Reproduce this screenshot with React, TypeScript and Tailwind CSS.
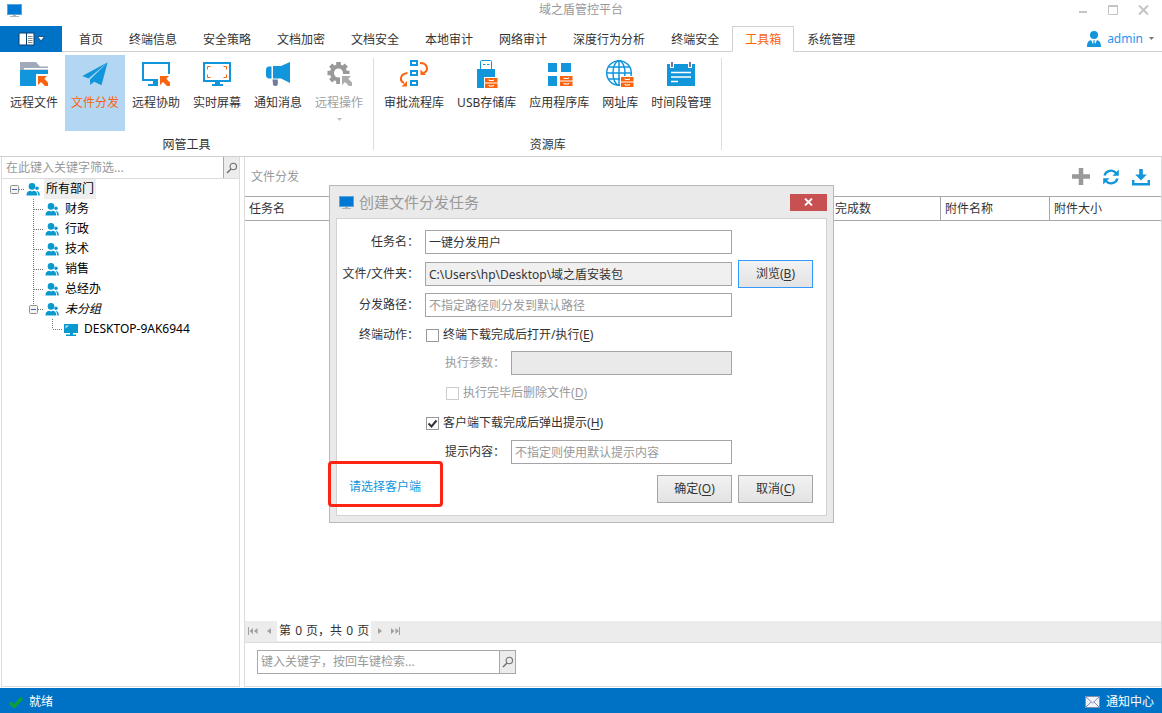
import { useState } from "react";
import type { ReactNode } from "react";
import clsx from "clsx";

const BLUE = "#1296db";
const ORANGE = "#fa6410";

const TABS = [
  "首页",
  "终端信息",
  "安全策略",
  "文档加密",
  "文档安全",
  "本地审计",
  "网络审计",
  "深度行为分析",
  "终端安全",
  "工具箱",
  "系统管理",
];

/* ---------- small icons ---------- */

function MonitorIcon() {
  return (
    <svg width="15" height="13" viewBox="0 0 15 13" className="shrink-0">
      <rect x="0.5" y="0.5" width="14" height="10" fill="#0078d4" stroke="#5aa5dc" />
      <path d="M6 11h3v1H6zM3 12h9v1H3z" fill="#b4b4b4" />
    </svg>
  );
}

function SearchIcon() {
  return (
    <svg width="12" height="12" viewBox="0 0 12 12" fill="none" stroke="#6e6e6e">
      <circle cx="7.3" cy="4.5" r="3.2" strokeWidth="1.1" />
      <path d="M5 7 1 11" strokeWidth="1.4" />
    </svg>
  );
}

function UsersIcon() {
  return (
    <svg width="14" height="13" viewBox="0 0 14 13" className="shrink-0" fill="#0a99cf">
      <circle cx="6" cy="3.4" r="3.3" />
      <path d="M0.5 12.5c0-3 1-4.2 3.6-4.8l1.9.7 1.9-.7c2.4.6 3.4 1.8 3.4 4.8z" />
      <circle cx="11" cy="5.3" r="1.7" />
      <path d="M10.4 8c2 .1 3.4 1 3.4 4.5h-1.6c0-2.2-.5-3.5-1.8-4.5z" />
    </svg>
  );
}

function DesktopIcon() {
  return (
    <svg width="14" height="13" viewBox="0 0 14 13" className="shrink-0">
      <path d="M0 1h14v9H0zM6 10h3v1.5h3V13H2v-1.5h4z" fill="#0a99cf" />
      <path d="M1.5 5.5V2.5H5z" fill="#bfe6f5" />
    </svg>
  );
}

function Cursor({ x, y, color }: { x: number; y: number; color: string }) {
  return (
    <g>
      <rect x={x - 2} y={y - 2} width="13" height="13" fill="#fff" />
      <path
        transform={`translate(${x} ${y})`}
        d="M0 0h9L6.3 2.7 10 6.5V10H7L3 6 0 9z"
        fill={color}
      />
    </g>
  );
}

function Cabinet({ x, y }: { x: number; y: number }) {
  return (
    <g transform={`translate(${x} ${y})`}>
      <rect x="-1" y="-1" width="14" height="12" fill="#fff" />
      <path d="M0 0h12.5v4.500H0zM0 5.500h12.5V10H0z" fill={ORANGE} />
      <path d="M4 1.500v1h4.5v-1M4 7v1h4.5V7" fill="none" stroke="#fff" />
    </g>
  );
}

/* ---------- ribbon icons, all on a 32x28 grid ---------- */

const RIBBON_ICONS: Record<string, ReactNode> = {
  folder: (
    <>
      <path d="M2 2h16l4 4.500h8V10H2z" fill="#a0aaba" />
      <path d="M6 8h24v1.500H6z" fill="#fff" />
      <path d="M2 10h28v16H2z" fill={BLUE} />
      <Cursor x={20} y={16} color={ORANGE} />
    </>
  ),
  plane: (
    <g fill={BLUE}>
      <path d="M28.7 2.300 3.300 16l6.200 2.500z" />
      <path d="M28.7 2.300 11 19.500l.2 5.500 4-3.300 7.300 3.500z" />
    </g>
  ),
  assist: (
    <>
      <rect x="3" y="3" width="26" height="17" fill="none" stroke={BLUE} strokeWidth="2" />
      <path d="M13 21h5v5H8v-2h5z" fill={BLUE} />
      <Cursor x={20} y={16} color={ORANGE} />
    </>
  ),
  screen: (
    <>
      <rect x="3" y="3" width="26" height="18" fill="none" stroke={BLUE} strokeWidth="2" />
      <path d="M14 22h5v2h3v2H11v-2h3z" fill={BLUE} />
      <path
        d="M6.500 9.500v-3h3M22.500 6.500h3v3M25.500 14.500v3h-3M9.500 17.500h-3v-3"
        fill="none"
        stroke={ORANGE}
      />
    </>
  ),
  horn: (
    <>
      <path d="M9.500 6.500v12H7C5 18.500 4 17 4 15v-5c0-2 1-3.500 3-3.500z" fill={BLUE} />
      <path d="M11 6h8l9-4v21l-9-4.500h-8z" fill={BLUE} />
      <path d="M10.500 19.500h5.300V24c0 1.200-1 2-2.500 2s-2.300-.8-2.300-2z" fill="#6f7a9c" />
    </>
  ),
  gear: (
    <>
      <g stroke="#999" strokeWidth="4.600">
        <path d="M15.500 2v22M4.500 13h22M7.700 5.200l15.600 15.600M23.300 5.200 7.700 20.800" />
      </g>
      <circle cx="15.500" cy="13" r="8.500" fill="#999" />
      <circle cx="15.500" cy="13" r="4.500" fill="#fff" />
      <Cursor x={19} y={16} color="#acacac" />
    </>
  ),
  flow: (
    <>
      <g fill="none" stroke={BLUE} strokeWidth="2">
        <rect x="13" y="1" width="6" height="4" />
        <rect x="13" y="11" width="6" height="4" />
        <rect x="13" y="21" width="6" height="4" />
      </g>
      <g fill="none" stroke={ORANGE} strokeWidth="2">
        <path d="M22 3c8 0 9 8 3.500 10" />
        <path d="M9.500 13c-8 1-8 8-3.500 10" />
      </g>
      <path d="M22.500 9.500v5.500h5.500zM9 26.500h-5.500L9 21z" fill={ORANGE} />
    </>
  ),
  usb: (
    <>
      <path d="M9.500 9V1.500q0-1 1-1h9q1 0 1 1V9" fill="none" stroke={BLUE} />
      <path d="M12 4.500h2.500M16 4.500h2.500" stroke={BLUE} />
      <path d="M6 9h18v19H6z" fill={BLUE} />
      <Cabinet x={14} y={18} />
    </>
  ),
  apps: (
    <>
      <path d="M5 3h9v9H5zM18 3h10v9H18zM5 16h9v10H5z" fill={BLUE} />
      <Cabinet x={17} y={16} />
    </>
  ),
  globe: (
    <>
      <g fill="none" stroke={BLUE} strokeWidth="1.500">
        <circle cx="15" cy="13" r="12.300" />
        <ellipse cx="15" cy="13" rx="6" ry="12.300" />
        <path d="M15 1v24M3 13h24M4.500 7h21M4.500 19h21" />
      </g>
      <Cabinet x={17} y={17} />
    </>
  ),
  calendar: (
    <>
      <path d="M2 4h28v22H2z" fill={BLUE} />
      <path d="M5 2h4v6H5zM23 2h4v6h-4z" fill="#fff" />
      <path d="M6 2h2v5H6zM24 2h2v5h-2z" fill="#6f7a9c" />
      <path d="M6 12.500h20M6 17h20M6 21.500h7" stroke="#fff" strokeWidth="1.500" />
    </>
  ),
};

interface Tool {
  icon: string;
  label: string;
  active?: boolean;
  disabled?: boolean;
}

const GROUPS: { name: string; tools: Tool[] }[] = [
  {
    name: "网管工具",
    tools: [
      { icon: "folder", label: "远程文件" },
      { icon: "plane", label: "文件分发", active: true },
      { icon: "assist", label: "远程协助" },
      { icon: "screen", label: "实时屏幕" },
      { icon: "horn", label: "通知消息" },
      { icon: "gear", label: "远程操作", disabled: true },
    ],
  },
  {
    name: "资源库",
    tools: [
      { icon: "flow", label: "审批流程库" },
      { icon: "usb", label: "USB存储库" },
      { icon: "apps", label: "应用程序库" },
      { icon: "globe", label: "网址库" },
      { icon: "calendar", label: "时间段管理" },
    ],
  },
];

function TitleBar() {
  return (
    <header className="relative flex h-[26px] shrink-0 items-start justify-center">
      <div className="absolute left-[7px] top-1">
        <MonitorIcon />
      </div>
      <h1 className="leading-5 text-[#999]">域之盾管控平台</h1>
      <div className="absolute right-[13px] top-1 flex gap-[19px]">
        <button aria-label="最小化">
          <svg width="11" height="12" viewBox="0 0 11 12">
            <path d="M1 7h8v2H1z" fill="#c4c4c4" />
          </svg>
        </button>
        <button aria-label="最大化">
          <svg width="11" height="12" viewBox="0 0 11 12">
            <path d="M.5 1.500h9v9h-9zM.5 2.500h9" fill="none" stroke="#c4c4c4" />
          </svg>
        </button>
        <button aria-label="关闭">
          <svg width="11" height="12" viewBox="0 0 11 12">
            <path d="m1 1.500 9 9m0-9-9 9" stroke="#c4c4c4" strokeWidth="2" />
          </svg>
        </button>
      </div>
    </header>
  );
}

function TabBar() {
  const [current, setCurrent] = useState("工具箱");

  return (
    <nav className="flex h-[26px] shrink-0 border-b border-[#d0d0d0]">
      <button
        aria-label="文件菜单"
        className="mr-1 flex h-[26px] w-[62px] shrink-0 items-center justify-center gap-0.5 bg-[#0072c6]"
      >
        <svg width="17" height="14" viewBox="0 0 17 14">
          <rect x="0.5" y="0.5" width="16" height="13" rx="1.500" fill="#0b3f6c" />
          <path d="M1.500 1.500H8v11H1.500zM9 1.500h6.500v11H9z" fill="#fff" />
          <path d="M10 4.500h4.500M10 6.500h4.500M10 8.500h4.500M10 10.500h4.500" stroke="#888" />
        </svg>
        <svg width="8" height="6" viewBox="0 0 8 6">
          <path d="M.5.5h7L4 5z" fill="#fff" stroke="#0b3f6c" strokeWidth="0.800" />
        </svg>
      </button>
      {TABS.map((tab) => (
        <button
          key={tab}
          onClick={() => setCurrent(tab)}
          className={clsx(
            "h-[26px] shrink-0 border px-3 pt-0.5",
            tab === current
              ? "border-[#d0d0d0] border-b-white bg-white text-[#fa6410]"
              : "border-transparent text-[#333]",
          )}
        >
          {tab}
        </button>
      ))}
      <button className="ml-auto mr-2 flex items-center gap-1.5 text-[#1e96f0]">
        <svg width="14" height="16" viewBox="0 0 14 16" fill={BLUE}>
          <ellipse cx="7" cy="4" rx="4" ry="4" />
          <path d="M0 16c0-4 1-6 4-7l3 6 3-6c3 1 4 3 4 7z" />
          <path d="M6 9.500h2l-.5 1.500.7 3L7 15.500 5.800 14l.7-3z" />
        </svg>
        admin
        <svg width="5" height="3" viewBox="0 0 5 3">
          <path d="M0 0h5L2.500 3z" fill="#777" />
        </svg>
      </button>
    </nav>
  );
}

function RibbonButton({ icon, label, active, disabled }: Tool) {
  return (
    <button
      disabled={disabled}
      className={clsx(
        "flex h-[76px] flex-col items-center px-1.5 pt-[5px]",
        active && "bg-[#b3d7f2] text-[#fa6410]",
        disabled && "text-[#a0a0a0]",
      )}
    >
      <svg width="32" height="28" viewBox="0 0 32 28">
        {RIBBON_ICONS[icon]}
      </svg>
      <span className="mt-[5px] leading-5 whitespace-nowrap">{label}</span>
      {disabled && (
        <svg width="5" height="3" viewBox="0 0 5 3" className="mt-[5px]">
          <path d="M0 0h5L2.500 3z" fill="#c0c0c0" />
        </svg>
      )}
    </button>
  );
}

function Ribbon() {
  return (
    <div className="flex h-[105px] shrink-0 border-b border-[#d0d0d0] pt-[3px]">
      {GROUPS.map((group) => (
        <section key={group.name} className="flex">
          <div className="flex flex-col items-center pl-1">
            <div className="flex gap-px">
              {group.tools.map((tool) => (
                <RibbonButton key={tool.label} {...tool} />
              ))}
            </div>
            <h2 className="mt-1 leading-5">{group.name}</h2>
          </div>
          <div className="ml-1 mt-[3px] h-[92px] w-px bg-[#dcdcdc]" />
        </section>
      ))}
    </div>
  );
}

/* ---------- department tree ---------- */

type Branch = "root" | "tee" | "open" | "last";

const BRANCH_LINES: Record<Branch, string> = {
  root: "M14 10.500h6",
  tee: "M9.500 0v20M10 10.500h10",
  open: "M9.500 0v6M14 10.500h6",
  last: "M9.500 0v10M10 10.500h10",
};

const NODES: { label: string; level: number; branch: Branch }[] = [
  { label: "所有部门", level: 0, branch: "root" },
  { label: "财务", level: 1, branch: "tee" },
  { label: "行政", level: 1, branch: "tee" },
  { label: "技术", level: 1, branch: "tee" },
  { label: "销售", level: 1, branch: "tee" },
  { label: "总经办", level: 1, branch: "tee" },
  { label: "未分组", level: 1, branch: "open" },
  { label: "DESKTOP-9AK6944", level: 2, branch: "last" },
];

const INDENT = ["pl-[3px]", "pl-[22px]", "pl-[41px]"];

function TreePanel() {
  return (
    <aside className="flex w-[239px] shrink-0 flex-col border border-t-0 border-[#dcdcdc]">
      <div className="flex h-[22px] border-b border-[#dcdcdc]">
        <input
          aria-label="筛选部门"
          placeholder="在此键入关键字筛选..."
          className="min-w-0 flex-1 px-1 outline-none placeholder:text-[#999]"
        />
        <button
          aria-label="筛选"
          className="flex w-4 items-center justify-center border-l border-[#a8a8a8] bg-[#ececec]"
        >
          <SearchIcon />
        </button>
      </div>
      <ul className="text-black">
        {NODES.map((node) => (
          <li key={node.label} className={clsx("flex h-5 items-center", INDENT[node.level])}>
            <svg width="21" height="20" viewBox="0 0 21 20" className="shrink-0">
              <path d={BRANCH_LINES[node.branch]} stroke="#777" strokeDasharray="1 1" />
              {(node.branch === "root" || node.branch === "open") && (
                <>
                  <rect x="5.500" y="6.500" width="8" height="8" rx="1" fill="#f4f4f4" stroke="#919191" />
                  <path d="M7 10.500h5" stroke="#4b63a7" />
                </>
              )}
            </svg>
            {node.level === 2 ? <DesktopIcon /> : <UsersIcon />}
            <span
              className={clsx(
                "ml-1 px-0.5 leading-5",
                node.branch === "root" && "bg-[#eee]",
                node.branch === "open" && "italic",
              )}
            >
              {node.label}
            </span>
          </li>
        ))}
      </ul>
    </aside>
  );
}

/* ---------- task list ---------- */

function PagerButton({ label, path }: { label: string; path: string }) {
  return (
    <button aria-label={label} className="flex h-5 w-4 items-center justify-center">
      <svg width="10" height="8" viewBox="0 0 10 8">
        <path d={path} fill="#a0a0a0" />
      </svg>
    </button>
  );
}

function TaskPanel() {
  return (
    <main className="flex min-w-0 flex-1 flex-col border border-t-0 border-[#dcdcdc]">
      <div className="flex h-[39px] items-center justify-between pl-1.5 pr-[11px]">
        <h2 className="text-[#999]">文件分发</h2>
        <div className="flex items-center gap-3">
          <button aria-label="新建">
            <svg width="18" height="18" viewBox="0 0 18 18">
              <path d="M9 0v17M0 8.500h18" stroke="#999" strokeWidth="4.500" />
            </svg>
          </button>
          <button aria-label="刷新">
            <svg width="18" height="18" viewBox="0 0 18 18">
              <path
                d="M2.500 7.500a6.700 6.700 0 0 1 11.500-2.500M15.500 10.500a6.700 6.700 0 0 1-11.500 2.500"
                fill="none"
                stroke={BLUE}
                strokeWidth="2.400"
              />
              <path d="M16.800 1.500v6.300h-6.300zM1.200 16.500v-6.300h6.300z" fill={BLUE} />
            </svg>
          </button>
          <button aria-label="导出">
            <svg width="18" height="18" viewBox="0 0 18 18" fill={BLUE}>
              <path d="M7.200 1h3.600v5.500h4L9 12.500l-5.800-6h4z" />
              <path d="M0 12h2.400v3h13.200v-3H18v5.500H0z" />
            </svg>
          </button>
        </div>
      </div>
      <table className="w-full table-fixed border-separate border-spacing-0">
        <thead>
          <tr className="[&>th]:h-[25px] [&>th]:border-y [&>th]:border-[#a8a8a8] [&>th]:p-0 [&>th]:pl-1 [&>th]:text-left [&>th]:font-normal">
            <th>任务名</th>
            <th className="w-[110px] border-r">完成数</th>
            <th className="w-[109px] border-r">附件名称</th>
            <th className="w-[111px]">附件大小</th>
          </tr>
        </thead>
      </table>
      <div className="mt-auto flex h-[22px] border-b border-[#dcdcdc] bg-[#ececec]">
        <PagerButton label="第一页" path="M0 0h1v8H0zM5 1v6L1.500 4zM9.500 1v6L6 4z" />
        <PagerButton label="上一页" path="M7 1v6L3 4z" />
        <p className="h-5 bg-white px-0.5 leading-5">
          第 <span className="px-px">0</span> 页，共 <span className="px-px">0</span> 页
        </p>
        <PagerButton label="下一页" path="M4 1v6l4-3z" />
        <PagerButton label="末页" path="M9 0h1v8H9zM1 1v6l3.500-3zM5.500 1v6L9 4z" />
      </div>
      <div className="flex h-[43px] shrink-0 pl-3 pt-[7px]">
        <div className="flex h-6 w-[259px] border border-[#a8a8a8]">
          <input
            aria-label="检索"
            placeholder="键入关键字，按回车键检索..."
            className="min-w-0 flex-1 px-[3px] outline-none placeholder:text-[#999]"
          />
          <button
            aria-label="搜索"
            className="flex w-4 items-center justify-center border-l border-[#a8a8a8] bg-[#ececec]"
          >
            <SearchIcon />
          </button>
        </div>
      </div>
    </main>
  );
}

/* ---------- dialog ---------- */

const FIELD = "h-6 border border-[#a5a5a5] bg-white px-[3px] outline-none placeholder:text-[#999]";
const LABEL = "w-[82px] shrink-0 mr-1.5 text-right whitespace-nowrap";
const BUTTON = "h-7 w-[75px] shrink-0 border bg-linear-to-b from-[#f2f2f2] to-[#e3e3e3]";

interface CheckProps {
  id: string;
  label: string;
  hotkey: string;
  defaultChecked?: boolean;
  disabled?: boolean;
}

function Check({ id, label, hotkey, defaultChecked, disabled }: CheckProps) {
  return (
    <div className="flex h-6 items-center gap-1">
      <span className="relative flex size-[13px]">
        <input
          id={id}
          type="checkbox"
          defaultChecked={defaultChecked}
          disabled={disabled}
          className="peer size-[13px] appearance-none border border-[#999] bg-white disabled:border-[#ccc]"
        />
        <svg
          viewBox="0 0 13 13"
          className="pointer-events-none absolute inset-0 hidden size-[13px] peer-checked:block"
        >
          <path d="M2.500 6.500 5.500 9.500 10.500 3.500" fill="none" stroke="#333" strokeWidth="2" />
        </svg>
      </span>
      <label htmlFor={id} className={clsx(disabled && "text-[#999]")}>
        {label}(<u className="underline-offset-2">{hotkey}</u>)
      </label>
    </div>
  );
}

function TaskDialog() {
  return (
    <div className="fixed inset-0 flex items-center justify-center pb-[5px] pl-px">
      <form
        role="dialog"
        aria-label="创建文件分发任务"
        onSubmit={(e) => e.preventDefault()}
        className="w-[505px] border border-[#b8b8b8] bg-[#eaeaea] p-1.5 pt-0"
      >
        <div className="flex h-8 items-center pl-[3px]">
          <MonitorIcon />
          <h2 className="ml-[5px] text-[15px] text-[#999]">创建文件分发任务</h2>
          <button
            type="button"
            aria-label="关闭对话框"
            className="ml-auto flex h-[17px] w-[37px] items-center justify-center bg-[#c75050]"
          >
            <svg width="9" height="8" viewBox="0 0 9 8">
              <path d="m1 .5 7 7m0-7-7 7" stroke="#fff" strokeWidth="1.800" />
            </svg>
          </button>
        </div>

        <div className="border border-[#d2d2d2] bg-white pb-3 pr-[13px] pt-[11px]">
          <div className="flex items-center">
            <label htmlFor="task-name" className={LABEL}>任务名：</label>
            <input id="task-name" className={clsx(FIELD, "w-[307px]")} defaultValue="一键分发用户" />
          </div>
          <div className="mt-1.5 flex items-center">
            <label htmlFor="task-file" className={LABEL}>文件/文件夹：</label>
            <input
              id="task-file"
              readOnly
              className="mr-1.5 h-6 w-[307px] border border-[#a5a5a5] bg-[#f0f0f0] px-[3px] outline-none"
              defaultValue="C:\Users\hp\Desktop\域之盾安装包"
            />
            <button type="button" className={clsx(BUTTON, "border-[#3399ff]")}>
              浏览(<u className="underline-offset-2">B</u>)
            </button>
          </div>
          <div className="mt-[5px] flex items-center">
            <label htmlFor="task-path" className={LABEL}>分发路径：</label>
            <input
              id="task-path"
              className={clsx(FIELD, "w-[307px]")}
              placeholder="不指定路径则分发到默认路径"
            />
          </div>
          <div className="mt-1.5 flex items-center">
            <span className={LABEL}>终端动作：</span>
            <div className="pl-px">
              <Check id="run-after" label="终端下载完成后打开/执行" hotkey="E" />
            </div>
          </div>

          <div className="mt-1 pl-[108px]">
            <div className="flex items-center gap-1.5">
              <label htmlFor="run-args" className="w-15 text-[#999]">执行参数：</label>
              <input
                id="run-args"
                disabled
                className="h-6 w-[221px] border border-[#a5a5a5] bg-[#eaeaea] px-[3px]"
              />
            </div>
            <div className="mt-1.5 pl-px">
              <Check id="delete-after" label="执行完毕后删除文件" hotkey="D" disabled />
            </div>
          </div>

          <div className="mt-1.5 pl-[89px]">
            <Check id="show-tip" label="客户端下载完成后弹出提示" hotkey="H" defaultChecked />
          </div>
          <div className="mt-[5px] flex items-center gap-1.5 pl-[108px]">
            <label htmlFor="tip-text" className="w-15">提示内容：</label>
            <input
              id="tip-text"
              className={clsx(FIELD, "w-[221px]")}
              placeholder="不指定则使用默认提示内容"
            />
          </div>

          <div className="mt-[11px] flex gap-1.5">
            <div className="relative mr-auto flex h-6 items-center pl-3">
              <a href="#clients" className="text-[#1296db]">请选择客户端</a>
              <div className="pointer-events-none absolute -left-[9px] -top-[14px] h-[46px] w-[115px] rounded-[4px] border-3 border-[#ff2314]" />
            </div>
            <button className={clsx(BUTTON, "border-[#a5a5a5]")}>
              确定(<u className="underline-offset-2">O</u>)
            </button>
            <button type="button" className={clsx(BUTTON, "border-[#a5a5a5]")}>
              取消(<u className="underline-offset-2">C</u>)
            </button>
          </div>
        </div>
      </form>
    </div>
  );
}

function StatusBar() {
  return (
    <footer className="mt-px flex h-[25px] shrink-0 items-center justify-between bg-[#0072c6] pl-[9px] pr-2 pt-0.5 text-white">
      <div className="flex items-center gap-1.5">
        <svg width="14" height="12" viewBox="0 0 14 12">
          <path d="M1 6.500 5 10.500 13 2" fill="none" stroke="#0aa03c" strokeWidth="3.500" />
        </svg>
        就绪
      </div>
      <button className="flex items-center gap-1.5">
        <svg width="15" height="12" viewBox="0 0 15 12">
          <rect x="0.500" y="0.500" width="14" height="11" fill="#f2f4fa" stroke="#7f8fb5" />
          <path d="m1 1 6.500 6L14 1M1 11l5-5M14 11 9 6" fill="none" stroke="#7f8fb5" />
        </svg>
        通知中心
      </button>
    </footer>
  );
}

export default function App() {
  return (
    <div className="flex h-screen flex-col overflow-hidden bg-white font-['Noto_Sans','Noto_Sans_CJK_SC',sans-serif] text-xs text-[#333]">
      <TitleBar />
      <TabBar />
      <Ribbon />
      <div className="flex min-h-0 flex-1 gap-1 pl-px">
        <TreePanel />
        <TaskPanel />
      </div>
      <StatusBar />
      <TaskDialog />
    </div>
  );
}
